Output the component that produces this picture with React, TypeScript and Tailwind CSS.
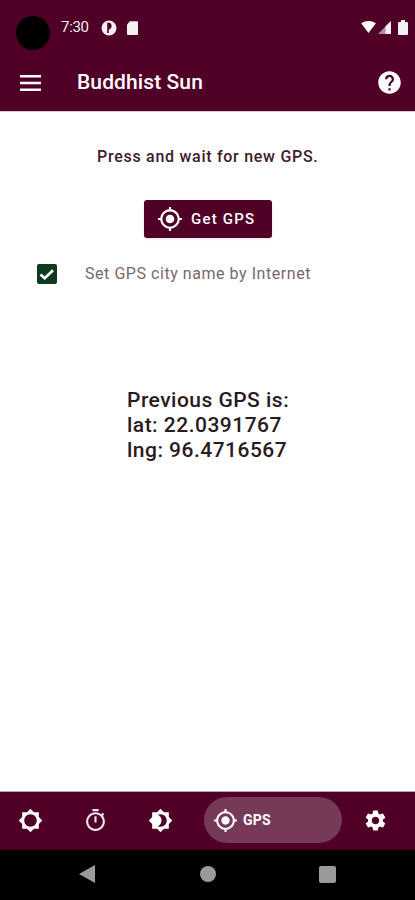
const GPS = "M12 8c-2.21 0-4 1.79-4 4s1.79 4 4 4 4-1.79 4-4-1.79-4-4-4zm8.94 3c-.46-4.17-3.77-7.48-7.94-7.94V1h-2v2.06C6.83 3.52 3.52 6.83 3.06 11H1v2h2.06c.46 4.17 3.77 7.48 7.94 7.94V23h2v-2.06c4.17-.46 7.48-3.77 7.94-7.94H23v-2h-2.06zM12 19c-3.87 0-7-3.13-7-7s3.13-7 7-7 7 3.13 7 7-3.13 7-7 7z";
const B5 = "M20 15.31L23.31 12 20 8.69V4h-4.69L12 .69 8.69 4H4v4.69L.69 12 4 15.31V20h4.69L12 23.31 15.31 20H20v-4.69zM12 18c-3.31 0-6-2.69-6-6s2.69-6 6-6 6 2.69 6 6-2.69 6-6 6z";
const B4 = "M20 8.69V4h-4.69L12 .69 8.69 4H4v4.69L.69 12 4 15.31V20h4.69L12 23.31 15.31 20H20v-4.69L23.31 12 20 8.69zM12 18c-.89 0-1.74-.2-2.5-.55C11.56 16.5 13 14.42 13 12s-1.44-4.5-3.5-5.45C10.26 6.2 11.11 6 12 6c3.31 0 6 2.69 6 6s-2.69 6-6 6z";
const TIMER = "M15 1H9v2h6V1zm-4 13h2V8h-2v6zm8.03-6.61l1.42-1.42c-.43-.51-.9-.99-1.41-1.41l-1.42 1.42C16.07 4.74 14.12 4 12 4c-4.97 0-9 4.03-9 9s4.02 9 9 9 9-4.03 9-9c0-2.12-.74-4.07-1.97-5.61zM12 20c-3.87 0-7-3.13-7-7s3.13-7 7-7 7 3.13 7 7-3.13 7-7 7z";
const GEAR = "M19.14 12.94c.04-.3.06-.61.06-.94 0-.32-.02-.64-.07-.94l2.03-1.58c.18-.14.23-.41.12-.61l-1.92-3.32c-.12-.22-.37-.29-.59-.22l-2.39.96c-.5-.38-1.03-.7-1.62-.94l-.36-2.54c-.04-.24-.24-.41-.48-.41h-3.84c-.24 0-.43.17-.47.41l-.36 2.54c-.59.24-1.13.57-1.62.94l-2.39-.96c-.22-.08-.47 0-.59.22L2.74 8.87c-.12.21-.08.47.12.61l2.03 1.58c-.05.3-.09.63-.09.94s.02.64.07.94l-2.03 1.58c-.18.14-.23.41-.12.61l1.92 3.32c.12.22.37.29.59.22l2.39-.96c.5.38 1.03.7 1.62.94l.36 2.54c.05.24.24.41.48.41h3.84c.24 0 .44-.17.47-.41l.36-2.54c.59-.24 1.13-.56 1.62-.94l2.39.96c.22.08.47 0 .59-.22l1.92-3.32c.12-.22.07-.47-.12-.61l-2.01-1.58zM12 15.6c-1.98 0-3.6-1.62-3.6-3.6s1.62-3.6 3.6-3.6 3.6 1.62 3.6 3.6-1.62 3.6-3.6 3.6z";
const HELP = "M12 2C6.48 2 2 6.48 2 12s4.48 10 10 10 10-4.48 10-10S17.52 2 12 2zm1 17h-2v-2h2v2zm2.07-7.75l-.9.92C13.45 12.9 13 13.5 13 15h-2v-.5c0-1.1.45-2.1 1.17-2.83l1.24-1.26c.37-.36.59-.86.59-1.41 0-1.1-.9-2-2-2s-2 .9-2 2H8c0-2.21 1.79-4 4-4s4 1.79 4 4c0 .88-.36 1.68-.93 2.25z";

function Icon({ d, className }: { d: string; className: string }) {
  return (
    <svg viewBox="0 0 24 24" fill="currentColor" className={className}>
      <path d={d} />
    </svg>
  );
}

export default function App() {
  return (
    <div className="w-[415px] h-[900px] flex flex-col bg-white font-['Roboto',sans-serif] overflow-hidden">
      <header className="h-[112px] shrink-0 bg-[#500027] text-white flex flex-col border-b border-[#d8d0d0]">
        <div className="h-[55px] flex pl-4 pr-[7px] pt-4">
          <div className="w-[34px] h-[34px] rounded-full bg-black shrink-0" />
          <div className="flex items-start justify-between flex-1 pl-[11px]">
            <div className="flex items-center h-[23px] gap-[11px] text-[#eee]">
              <span className="text-[15px] tracking-[-0.3px]">7:30</span>
              <svg viewBox="0 0 16 16" className="w-[16px] h-[16px] ml-[1px]">
                <circle cx="8" cy="8" r="7.5" fill="#f4f0f2" />
                <path d="M7 3v10M7 3.5h1.5a3 3 0 0 1 0 5H7z" stroke="#500027" strokeWidth="1.6" fill="#500027" />
              </svg>
              <svg viewBox="0 0 12 15" className="w-[11px] h-[14px] -ml-[1px]">
                <path d="M3 0h8a1 1 0 0 1 1 1v13a1 1 0 0 1-1 1H1a1 1 0 0 1-1-1V4z" fill="#f4f0f2" />
              </svg>
            </div>
            <div className="flex items-center h-[22px] gap-[2px]">
              <svg viewBox="0 0 16 13" className="w-[15px] h-[12px]">
                <path d="M0 2.5Q8-2.5 16 2.5L8 13z" fill="#fff" />
              </svg>
              <svg viewBox="0 0 14 14" className="w-[13px] h-[13px]">
                <path d="M14 0v14H0z" fill="#a9929e" />
                <path d="M14 0v14H8V6z" fill="#f4f0f2" />
              </svg>
              <svg viewBox="0 0 10 15" className="w-[10px] h-[15px] ml-[5px]">
                <path d="M3 0h4v2h2a1 1 0 0 1 1 1v11a1 1 0 0 1-1 1H1a1 1 0 0 1-1-1V3a1 1 0 0 1 1-1h2z" fill="#f4f0f2" />
              </svg>
            </div>
          </div>
        </div>
        <div className="flex-1 flex items-center pl-[20px] pr-[12px] pb-[1px]">
          <svg viewBox="0 0 21 16" className="w-[21px] h-[16px] shrink-0">
            <path d="M0 1.2h21M0 8h21M0 14.8h21" stroke="#fff" strokeWidth="2.4" />
          </svg>
          <h1 className="ml-[36px] flex-1 text-[21px] font-medium leading-none tracking-[0.1px]">Buddhist Sun</h1>
          <Icon d={HELP} className="w-[27px] h-[27px] text-white" />
        </div>
      </header>

      <main className="flex-1 flex flex-col">
        <p className="mt-[36px] ml-[97px] text-[16px] leading-[18px] font-medium tracking-[0.72px] text-[#3f1a2c]">
          Press and wait for new GPS.
        </p>
        <button className="mt-[34px] ml-[144px] w-[128px] h-[38px] rounded-[3px] bg-[#500027] text-white flex items-center pl-[13px] gap-[8px] shadow-sm">
          <Icon d={GPS} className="w-[26px] h-[26px]" />
          <span className="text-[15px] font-medium tracking-[1.2px]">Get GPS</span>
        </button>
        <div className="mt-[26px] ml-[37px] flex items-center">
          <span className="w-[20px] h-[20px] rounded-[2px] bg-[#0f3a20] flex items-center justify-center">
            <svg viewBox="0 0 20 20" className="w-[20px] h-[20px]">
              <path d="M3.5 10.5l4.2 3.8 8.3-8" fill="none" stroke="#fff" strokeWidth="2.6" />
            </svg>
          </span>
          <span className="ml-[28px] text-[16px] text-[#7a6670] leading-[20px] tracking-[0.55px]">Set GPS city name by Internet</span>
        </div>
        <div className="mt-[104px] ml-[127px] text-[21px] leading-[25px] font-medium tracking-[0.48px] text-[#2a1a22]">
          <div>Previous GPS is:</div>
          <div>lat: 22.0391767</div>
          <div>lng: 96.4716567</div>
        </div>
      </main>

      <nav className="h-[59px] shrink-0 bg-[#500027] text-white flex items-center pl-[18px] pb-[2px] border-t border-[#b9a4ae]">
        <Icon d={B5} className="w-[25px] h-[25px]" />
        <Icon d={TIMER} className="w-[25px] h-[25px] ml-[40px] text-[#f0e8ec]" />
        <Icon d={B4} className="w-[25px] h-[25px] ml-[40px]" />
        <div className="ml-[31px] w-[138px] h-[46px] shrink-0 rounded-full bg-[#763a58] flex items-center pl-[9px] gap-[5px]">
          <Icon d={GPS} className="w-[25px] h-[25px]" />
          <span className="text-[14px] font-bold tracking-[0.2px]">GPS</span>
        </div>
        <Icon d={GEAR} className="w-[25px] h-[25px] ml-[21px]" />
      </nav>

      <div className="h-[50px] shrink-0 bg-black flex items-center pb-[2px] pl-[79px]">
        <svg viewBox="0 0 16 18" className="w-[16px] h-[18px]">
          <path d="M16 0v18L0 9z" fill="#9a9a9a" />
        </svg>
        <span className="ml-[105px] w-[16px] h-[16px] rounded-full bg-[#9a9a9a]" />
        <span className="ml-[103px] w-[17px] h-[17px] rounded-[2px] bg-[#9a9a9a]" />
      </div>
    </div>
  );
}
